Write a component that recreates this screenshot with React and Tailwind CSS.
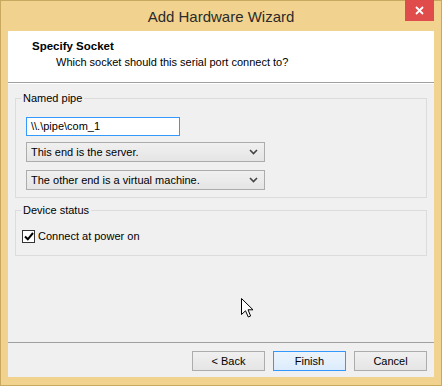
import React from 'react'

const FONT = { fontFamily: '"Liberation Sans", Arial, sans-serif' }

function Chevron() {
  return (
    <svg width="9" height="6" viewBox="0 0 9 6" className="shrink-0">
      <path d="M1 1 L4.5 4.5 L8 1" fill="none" stroke="#444" strokeWidth="1.6" />
    </svg>
  )
}

function Select({ value }) {
  return (
    <div className="flex h-[20px] w-[239px] items-center justify-between border border-[#acacac] bg-gradient-to-b from-[#f0f0f0] to-[#e5e5e5] pl-[4px] pr-[6px] text-[11px] text-black">
      <span>{value}</span>
      <Chevron />
    </div>
  )
}

function Button({ children, primary }) {
  return (
    <button
      className={
        primary
          ? 'h-[20px] w-[73px] border border-[#3399ff] bg-gradient-to-b from-[#ecf4fc] to-[#dcecfc] text-[11px] text-black'
          : 'h-[20px] w-[73px] border border-[#acacac] bg-gradient-to-b from-[#f0f0f0] to-[#e5e5e5] text-[11px] text-black'
      }
    >
      {children}
    </button>
  )
}

export default function App() {
  return (
    <div
      style={FONT}
      className="relative flex h-[386px] w-[442px] flex-col border border-[#c9a860] bg-[#f1d38f]"
    >
      {/* title bar */}
      <div className="relative flex h-[30px] shrink-0 items-center justify-center">
        <span className="pt-[2px] text-[15px] text-[#2b2b2b]">Add Hardware Wizard</span>
        <div className="absolute right-[7px] top-[-1px] flex h-[21px] w-[29px] items-center justify-center bg-[#e04b4b]">
          <svg width="9" height="9" viewBox="0 0 9 9">
            <path d="M1 1 L8 8 M8 1 L1 8" stroke="#fff" strokeWidth="1.8" />
          </svg>
        </div>
      </div>

      {/* client */}
      <div className="mx-[7px] mb-[8px] flex flex-1 flex-col bg-[#f0f0f0]">
        <div className="h-[51px] shrink-0 bg-white pl-[24px] pt-[8px]">
          <div className="text-[11.5px] font-bold leading-[14px] text-black">Specify Socket</div>
          <div className="pl-[24px] pt-[2px] text-[11px] leading-[14px] text-black">
            Which socket should this serial port connect to?
          </div>
        </div>
        <div className="h-[2px] shrink-0 border-t border-[#a0a0a0] bg-white" />

        <div className="flex flex-1 flex-col px-[7px] pt-[7px]">
          <fieldset className="border border-[#dcdcdc] pb-[7px] pl-[10px]">
            <legend className="-ml-[5px] px-[2px] text-[11px] leading-[14px] text-black">Named pipe</legend>
            <div className="mt-[12px] flex h-[19px] w-[154px] items-center border border-[#3399ff] bg-white pl-[4px] text-[11px] text-black">
              {'\\\\.\\pipe\\com_1'}
            </div>
            <div className="mt-[6px]">
              <Select value="This end is the server." />
            </div>
            <div className="mt-[8px]">
              <Select value="The other end is a virtual machine." />
            </div>
          </fieldset>

          <fieldset className="mt-[5px] border border-[#dcdcdc] pb-[10px] pl-[6px]">
            <legend className="-ml-[1px] px-[2px] text-[11px] leading-[14px] text-black">Device status</legend>
            <div className="mt-[11px] flex items-center gap-[3px] text-[11px] text-black">
              <div className="flex h-[13px] w-[13px] items-center justify-center border border-[#333] bg-white">
                <svg width="10" height="9" viewBox="0 0 10 9">
                  <path d="M1 4.5 L3.8 7.3 L9 1" fill="none" stroke="#000" strokeWidth="2" />
                </svg>
              </div>
              <span>Connect at power on</span>
            </div>
          </fieldset>
        </div>

        <div className="shrink-0 border-t border-[#a0a0a0]">
          <div className="flex justify-end gap-[8px] pb-[6px] pr-[7px] pt-[8px]">
            <Button>&lt; Back</Button>
            <Button primary>Finish</Button>
            <Button>Cancel</Button>
          </div>
        </div>
      </div>

      {/* mouse pointer */}
      <svg
        className="absolute left-[240px] top-[297px]"
        width="13"
        height="20"
        viewBox="0 0 13 20"
      >
        <path
          d="M0.5 0.5 L0.5 16.5 L4.5 12.8 L7.3 19 L9.6 18 L7 11.8 L12 11.8 Z"
          fill="#fff"
          stroke="#000"
          strokeWidth="1"
        />
      </svg>
    </div>
  )
}
